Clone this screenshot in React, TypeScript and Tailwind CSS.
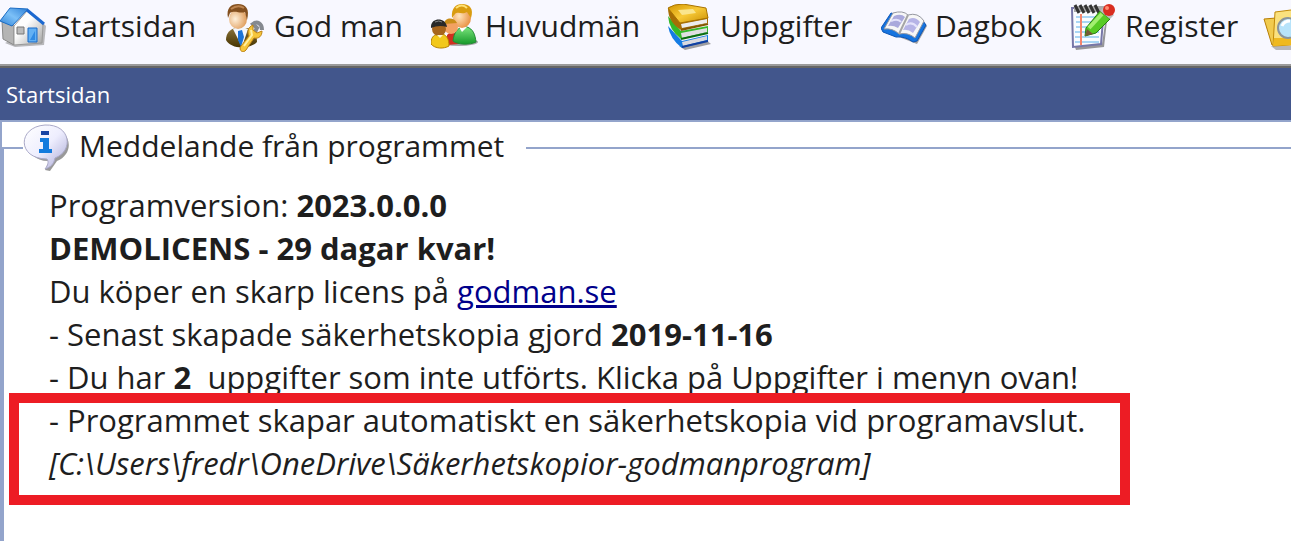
import type { ReactNode } from "react";

function HouseIcon() {
  return (
    <svg className="size-12 shrink-0" viewBox="0 0 48 48" aria-hidden="true">
      <defs>
        <linearGradient id="roof" x1="0" y1="1" x2="1" y2="0">
          <stop offset="0" stopColor="#2f83d8" />
          <stop offset="0.5" stopColor="#7cc0f7" />
          <stop offset="1" stopColor="#2d7fd6" />
        </linearGradient>
        <linearGradient id="wall" x1="0" y1="0" x2="1" y2="1">
          <stop offset="0.4" stopColor="#fdfdfd" />
          <stop offset="1" stopColor="#a2a2a2" />
        </linearGradient>
      </defs>
      <path d="M5 39 15 43 44 41 46 22 44 20Z" fill="#777" opacity=".5" />
      <path d="M2 17 14 22V41L3 35Z" fill="#b4b4b4" stroke="#888" />
      <path d="M14 22 27 7 43 20 42 39 14 41Z" fill="url(#wall)" stroke="#999" />
      <path d="M0 17 10 4 28 5 12 22Z" fill="url(#roof)" stroke="#1b6cc4" />
      <path d="M27 6 44 20" stroke="#1c68d0" strokeWidth="3" />
      <path d="M17 23h7v7h-7z" fill="#bbb" stroke="#777" />
      <path d="M28 24h9v14h-9z" fill="#63b0f3" stroke="#1668c8" />
      <path d="M30 36 35 27v9z" fill="#2f8ae4" />
    </svg>
  );
}

function ManWrenchIcon() {
  return (
    <svg className="size-12 shrink-0" viewBox="0 0 48 48" aria-hidden="true">
      <defs>
        <radialGradient id="face" cx=".35" cy=".5" r=".7">
          <stop offset="0" stopColor="#fff0da" />
          <stop offset="1" stopColor="#dc9550" />
        </radialGradient>
        <linearGradient id="suit" x1="0" y1="0" x2="0" y2="1">
          <stop offset="0" stopColor="#8a7238" />
          <stop offset="1" stopColor="#453300" />
        </linearGradient>
      </defs>
      <path d="M6 36c0-7 4-11 10-12h12c6 2 9 7 9 14-6 7-26 8-31-2z" fill="url(#suit)" />
      <path d="M13 25 22 43 28 25 20 22Z" fill="#f3f6fb" />
      <path d="M18 27 22 26 24 33 21 43 18 36Z" fill="#1b73d6" />
      <ellipse cx="18" cy="15" rx="9" ry="10" fill="url(#face)" />
      <path d="M8 14C6 4 11 0 18 0c8 0 12 5 9 16l-2-8c-5 2-10-2-15 1z" fill="#84501f" />
      <path d="M11 5q7-5 13-1" stroke="#bd8550" strokeWidth="2" fill="none" />
      <path d="M42 26c0-7-5-9-9-6l4 4-2 4-4 1" fill="none" stroke="#858990" strokeWidth="4" />
      <path
        d="M33 21c-5 2-6 7-4 11l-8 10c-3 4 2 8 5 4l8-12c5 1 8-2 8-7l-5 2-4-3z"
        fill="#f6c63b"
        stroke="#bd8214"
      />
      <path d="M31 26 32 31 24 42" stroke="#fff0a3" strokeWidth="2" fill="none" />
    </svg>
  );
}

function PeopleIcon() {
  return (
    <svg className="size-12 shrink-0" viewBox="0 0 48 48" aria-hidden="true">
      <defs>
        <radialGradient id="skin" cx=".35" cy=".4" r=".7">
          <stop offset="0" stopColor="#ffe4bc" />
          <stop offset="1" stopColor="#e88d3d" />
        </radialGradient>
        <linearGradient id="green" x1="0" y1="0" x2="0" y2="1">
          <stop offset="0" stopColor="#7be47d" />
          <stop offset="1" stopColor="#169a2a" />
        </linearGradient>
      </defs>
      <ellipse cx="28" cy="38" rx="19" ry="4" fill="#555" opacity=".5" />
      <path d="M16 41V31q5-6 12 1v8z" fill="#cf3020" />
      <path d="M22 37c1-8 4-13 10-14h4c6 2 8 7 9 15-6 3-18 3-23-1z" fill="url(#green)" stroke="#248b35" />
      <path d="M28 23 31 28 36 23Z" fill="#fff" />
      <ellipse cx="31" cy="14" rx="9" ry="10" fill="url(#skin)" />
      <path d="M21 14C20 4 25 0 31 0c8 0 12 5 9 14l-4-6c-5 3-9-1-12 2z" fill="#d99c10" />
      <path d="M25 4q6-5 11 0" stroke="#ffe276" strokeWidth="2" fill="none" />
      <circle cx="20" cy="23" r="7" fill="#f3a162" />
      <path d="M13 20c1-7 10-7 13-1z" fill="#c98d19" />
      <path d="M0 40c0-6 2-9 7-10h5c4 2 6 5 6 12-5 3-14 3-18-2z" fill="#f2c81c" stroke="#b88300" />
      <circle cx="8" cy="25" r="7" fill="#a7651d" />
      <path d="M0 24c-1-11 15-11 16-1-6-2-11-1-16 1z" fill="#292929" />
      <path d="M4 18q4-2 7 0" stroke="#888" fill="none" />
      <path d="M6 31 9 34 12 31Z" fill="#fff6c7" />
    </svg>
  );
}

function BooksIcon() {
  return (
    <svg className="size-12 shrink-0" viewBox="0 0 48 48" aria-hidden="true">
      <defs>
        <linearGradient id="cover" x1="0" y1="0" x2="1" y2="1">
          <stop offset="0" stopColor="#d19400" />
          <stop offset=".5" stopColor="#f8ca38" />
          <stop offset="1" stopColor="#c98d00" />
        </linearGradient>
      </defs>
      <path d="M13 42 40 36 45 40 19 46Z" fill="#444" opacity=".5" />
      <path d="M2 22 16 37 42 31V37L16 44Q4 35 2 22Z" fill="#147ce4" />
      <path d="M16 38 41 32V36L17 42Z" fill="#d9d9df" />
      <path d="M16 43 42 37" stroke="#123f9f" strokeWidth="2" />
      <path d="M2 12 15 27 42 22V28L15 35Q3 26 2 12Z" fill="#35b928" />
      <path d="M15 29 41 24V28L16 34Z" fill="#dfdfe2" />
      <path d="M15 35 42 29" stroke="#0b6d13" strokeWidth="2" />
      <path d="M2 4 14 17 42 13V19L15 26Q2 18 2 4Z" fill="#a66d05" />
      <path d="M15 20 41 15V19L16 24Z" fill="#ececec" />
      <path d="M2 4Q8 0 17 0L40 4 42 14 14 19Z" fill="url(#cover)" stroke="#a97300" />
      <path d="M12 6 27 5 30 9 16 11Z" fill="#fae58d" />
      <path d="M15 26 42 20" stroke="#835600" strokeWidth="2" />
    </svg>
  );
}

function OpenBookIcon() {
  return (
    <svg className="size-12 shrink-0" viewBox="0 0 48 48" aria-hidden="true">
      <path d="M5 28 36 40 46 22 42 17Z" fill="#444" opacity=".5" />
      <path d="M10 9 0 24 2 28 15 33Q24 32 32 38L36 37 45 21 42 17Z" fill="#1674df" stroke="#0c55b6" />
      <path d="M12 9Q22 6 27 11 37 8 43 17L34 34Q27 28 18 30 12 24 3 25Z" fill="#f7f7f7" stroke="#9698a1" />
      <path d="M27 11 18 30" stroke="#a5a5a5" strokeWidth="2" />
      <path d="M13 12Q20 9 24 13L17 24Q12 21 7 22Z" fill="#aaa9dc" />
      <path d="M28 15Q34 12 39 18L32 29Q27 25 22 26Z" fill="#b6b4e6" />
      <path d="M10 17Q17 14 20 18M25 21Q31 17 36 23" stroke="#e4e3fb" strokeWidth="2" fill="none" />
    </svg>
  );
}

function NotepadIcon() {
  return (
    <svg className="size-12 shrink-0" viewBox="0 0 48 48" aria-hidden="true">
      <path d="M4 43 31 40 36 6 37 8 33 43 5 46Z" fill="#555" opacity=".6" />
      <path d="M1 4H33L30 40 2 43Z" fill="#fafcff" stroke="#7777a8" strokeWidth="2" />
      <path d="M5 13H29M5 18H29M5 23H28M4 28H28M4 33H28M4 38H28" stroke="#a9d6f5" strokeWidth="2" />
      <path d="M10 10V41" stroke="#f4846c" strokeWidth="2" />
      <path d="M3 2H34V8H3Z" fill="#aaa" />
      <path d="M4 1 8 9M9 1 13 9M14 1 18 9M19 1 23 9M24 1 28 9" stroke="#333" strokeWidth="3" />
      <path d="M15 24 29 7 39 15 25 29 14 32Z" fill="#57cb25" stroke="#287d12" />
      <path d="M18 24 31 10" stroke="#a4ef71" strokeWidth="4" />
      <path d="M14 32 16 25 22 30Z" fill="#765a35" />
      <path d="M29 7 33 3 43 11 39 15Z" fill="#bbb" />
      <circle cx="38" cy="6" r="6" fill="#d92d20" />
      <circle cx="36" cy="4" r="2" fill="#ff8a70" />
    </svg>
  );
}

function FolderSearchIcon() {
  return (
    <svg className="size-12 shrink-0" viewBox="0 0 48 48" aria-hidden="true">
      <path d="M10 42H46V46H15Z" fill="#555" opacity=".4" />
      <path d="M3 15 15 14 18 40 11 41Z" fill="#f1cb4e" stroke="#b77e05" />
      <path d="M14 8 30 6 33 9H48V40L12 42Z" fill="#fae17e" stroke="#c28a08" />
      <path d="M13 34H48V40L12 42Z" fill="#efb920" />
      <circle cx="27" cy="24" r="10" fill="#b7e3fa" stroke="#8a949b" strokeWidth="2" />
      <path d="M21 22q2-5 8-5" stroke="#fff" strokeWidth="3" fill="none" />
    </svg>
  );
}

function InfoBubbleIcon() {
  return (
    <svg className="size-12 shrink-0" viewBox="0 0 48 48" aria-hidden="true">
      <defs>
        <linearGradient id="bubble" x1="0" y1="0" x2="1" y2="1">
          <stop offset="0" stopColor="#fff" />
          <stop offset=".5" stopColor="#eeeefe" />
          <stop offset="1" stopColor="#a9a8d5" />
        </linearGradient>
      </defs>
      <path
        d="M24 4C50 4 52 30 34 37L27 47 22 46 26 37C0 38-1 5 24 4Z"
        fill="#555"
        opacity=".6"
      />
      <path
        d="M22 1C48 0 51 27 32 34 31 40 28 43 22 45 25 41 26 38 24 35-6 35-6 3 22 1Z"
        fill="url(#bubble)"
        stroke="#aaa9c8"
      />
      <path d="M18 7h8v4h-8z" fill="#1743a4" />
      <path d="M17 14h9v11h3v4H16v-4h4v-7h-3z" fill="#147bdd" />
    </svg>
  );
}

interface MenuItem {
  label: string;
  icon: ReactNode;
  width: string;
}

const menu: MenuItem[] = [
  { label: "Startsidan", icon: <HouseIcon />, width: "w-[220px]" },
  { label: "God man", icon: <ManWrenchIcon />, width: "w-[211px]" },
  { label: "Huvudmän", icon: <PeopleIcon />, width: "w-[235px]" },
  { label: "Uppgifter", icon: <BooksIcon />, width: "w-[215px]" },
  { label: "Dagbok", icon: <OpenBookIcon />, width: "w-[190px]" },
  { label: "Register", icon: <NotepadIcon />, width: "w-[190px]" },
];

export default function App() {
  return (
    <div className="flex min-h-screen flex-col overflow-hidden bg-white font-['Open_Sans','Noto_Sans',sans-serif] text-[30px] text-[#1e1e1e]">
      <nav className="flex h-[66px] shrink-0 overflow-hidden border-b-2 border-[#9b9b9b] bg-[#f8f8ff] pt-1">
        {menu.map((item) => (
          <button
            key={item.label}
            type="button"
            className={`flex h-12 shrink-0 items-center gap-1.5 whitespace-nowrap ${item.width}`}
          >
            {item.icon}
            <span className="pb-1 leading-10">{item.label}</span>
          </button>
        ))}
        <button type="button" aria-label="Sök" className="h-12 shrink-0">
          <FolderSearchIcon />
        </button>
      </nav>

      <header className="flex h-[54px] shrink-0 items-center border-t-2 border-[#666] bg-[#42568c] px-1.5">
        <h1 className="text-[22px] text-white">Startsidan</h1>
      </header>

      <main className="flex grow flex-col border-t-2 border-l-2 border-[#93a4cb]">
        <fieldset className="grow border-t-2 border-l-2 border-[#93a4cb] pl-[45px]">
          <legend className="-ml-[26px] flex h-[52px] items-center gap-2 pr-[22px]">
            <InfoBubbleIcon />
            <span className="pb-1 leading-10">Meddelande från programmet</span>
          </legend>
          <div className="pt-2.5 text-[31px] leading-[43px] whitespace-nowrap">
            <p>
              Programversion: <b>2023.0.0.0</b>
            </p>
            <p>
              <b>DEMOLICENS - 29 dagar kvar!</b>
            </p>
            <p>
              Du köper en skarp licens på{" "}
              <a href="#" className="text-[#00008b] underline">
                godman.se
              </a>
            </p>
            <p>
              - Senast skapade säkerhetskopia gjord <b>2019-11-16</b>
            </p>
            <p>
              - Du har <b>2</b>&nbsp; uppgifter som inte utförts. Klicka på Uppgifter i menyn ovan!
            </p>
            <div className="relative">
              <p>- Programmet skapar automatiskt en säkerhetskopia vid programavslut.</p>
              <p className="italic">[C:\Users\fredr\OneDrive\Säkerhetskopior-godmanprogram]</p>
              {/* marker frame over the backup lines */}
              <div className="pointer-events-none absolute -top-1.5 -left-10 h-28 w-[1121px] border-10 border-[#ed1c24]" />
            </div>
          </div>
        </fieldset>
      </main>
    </div>
  );
}
